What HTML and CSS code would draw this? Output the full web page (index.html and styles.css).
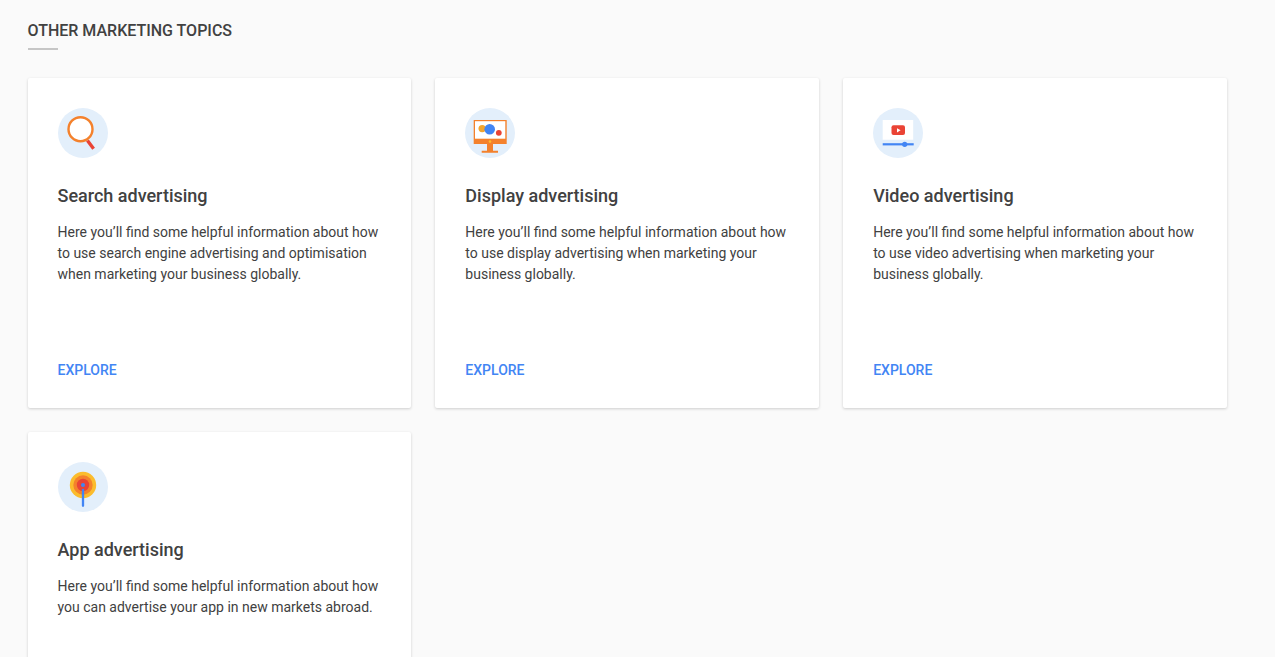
FILE: index.html
```html
<!DOCTYPE html>
<html lang="en">
<head>
  <meta charset="UTF-8">
  <meta name="viewport" content="width=device-width, initial-scale=1.0">
  <title>Other marketing topics</title>
  <link rel="stylesheet" href="styles.css">
</head>
<body>
  <section class="topics">
    <h2 class="topics-title">Other marketing topics</h2>

    <div class="cards">
      <article class="card">
        <svg class="card-icon" viewBox="0 0 50 50" aria-hidden="true">
          <circle cx="25" cy="25" r="25" fill="#e3effb"/>
          <path d="M29.4 32.5L35.600 40.700" stroke="#ea4335" stroke-width="3.4"/>
          <circle cx="22.500" cy="21.200" r="12" fill="#fff" stroke="#f4812c" stroke-width="2.4"/>
        </svg>
        <h3>Search advertising</h3>
        <p>Here you’ll find some helpful information about how to use search engine advertising and optimisation when marketing your business globally.</p>
        <a class="explore">Explore</a>
      </article>

      <article class="card">
        <svg class="card-icon" viewBox="0 0 50 50" aria-hidden="true">
          <circle cx="25" cy="25" r="25" fill="#e3effb"/>
          <path d="M22 35h6v8h-6zM16.700 42.700h16.300v2h-16.300z" fill="#f4812c"/>
          <path d="M8.700 12h33v24h-33z" fill="#f4812c"/>
          <path d="M10 13.200h30.300v17.500H10z" fill="#fff"/>
          <circle cx="17.200" cy="20.600" r="3.700" fill="#f2a530"/>
          <circle cx="24.700" cy="21.200" r="5.300" fill="#4285f4"/>
          <circle cx="33.800" cy="24.800" r="2.900" fill="#ea4335"/>
          <circle cx="25" cy="33.600" r="1.300" fill="#fbbc2d"/>
        </svg>
        <h3>Display advertising</h3>
        <p>Here you’ll find some helpful information about how to use display advertising when marketing your business globally.</p>
        <a class="explore">Explore</a>
      </article>

      <article class="card">
        <svg class="card-icon" viewBox="0 0 50 50" aria-hidden="true">
          <circle cx="25" cy="25" r="25" fill="#e3effb"/>
          <path d="M9.700 12h30.500v19.700H9.700z" fill="#fff"/>
          <rect x="18.500" y="17.200" width="13.500" height="9.800" rx="2" fill="#ea4335"/>
          <path d="M24 20.200l3.600 2.100-3.600 2.100z" fill="#fff"/>
          <path d="M9.700 36.300h31" stroke="#4285f4" stroke-width="2.200"/>
          <circle cx="31.700" cy="36.300" r="2.600" fill="#4285f4"/>
        </svg>
        <h3>Video advertising</h3>
        <p>Here you’ll find some helpful information about how to use video advertising when marketing your business globally.</p>
        <a class="explore">Explore</a>
      </article>

      <article class="card">
        <svg class="card-icon" viewBox="0 0 50 50" aria-hidden="true">
          <circle cx="25" cy="25" r="25" fill="#e3effb"/>
          <circle cx="25" cy="23" r="13.200" fill="#fbbc2d"/>
          <circle cx="25" cy="23" r="9.700" fill="#f4812c"/>
          <circle cx="25" cy="23" r="6.200" fill="#ea4335"/>
          <circle cx="25" cy="23" r="2" fill="#4285f4"/>
          <path d="M25 28v15.800" stroke="#4285f4" stroke-width="2.300" stroke-linecap="round"/>
        </svg>
        <h3>App advertising</h3>
        <p>Here you’ll find some helpful information about how you can advertise your app in new markets abroad.</p>
      </article>
    </div>
  </section>
</body>
</html>
```
FILE: styles.css
```css
* {
  box-sizing: border-box;
}

body {
  margin: 0;
  background: #fafafa;
  color: #414141;
  font-family: Roboto, sans-serif;
}

.topics {
  height: 657px;
  padding: 20px 48px 0 27.5px;
  overflow: hidden;
}

.topics-title {
  margin: 0;
  font-size: 16px;
  line-height: 22px;
  font-weight: 500;
  text-transform: uppercase;
}

.topics-title::after {
  content: "";
  display: block;
  width: 30px;
  height: 2px;
  margin-top: 6px;
  background: #c6c6c6;
}

.cards {
  display: grid;
  grid-template-columns: repeat(3, 1fr);
  grid-auto-rows: 330px;
  gap: 24px;
  margin-top: 28px;
}

.card {
  display: flex;
  flex-direction: column;
  align-items: flex-start;
  padding: 30px;
  background: #fff;
  border-radius: 2px;
  box-shadow: 0 1px 3px rgba(0, 0, 0, 0.18);
}

.card-icon {
  width: 50px;
  height: 50px;
}

.card h3 {
  margin: 26px 0 0;
  font-size: 18px;
  line-height: 24px;
  font-weight: 500;
}

.card p {
  margin: 14px 0 0;
  font-size: 14px;
  line-height: 21px;
}

.explore {
  margin-top: auto;
  color: #4285f4;
  font-size: 14px;
  line-height: 16px;
  font-weight: 500;
  text-transform: uppercase;
}
```
